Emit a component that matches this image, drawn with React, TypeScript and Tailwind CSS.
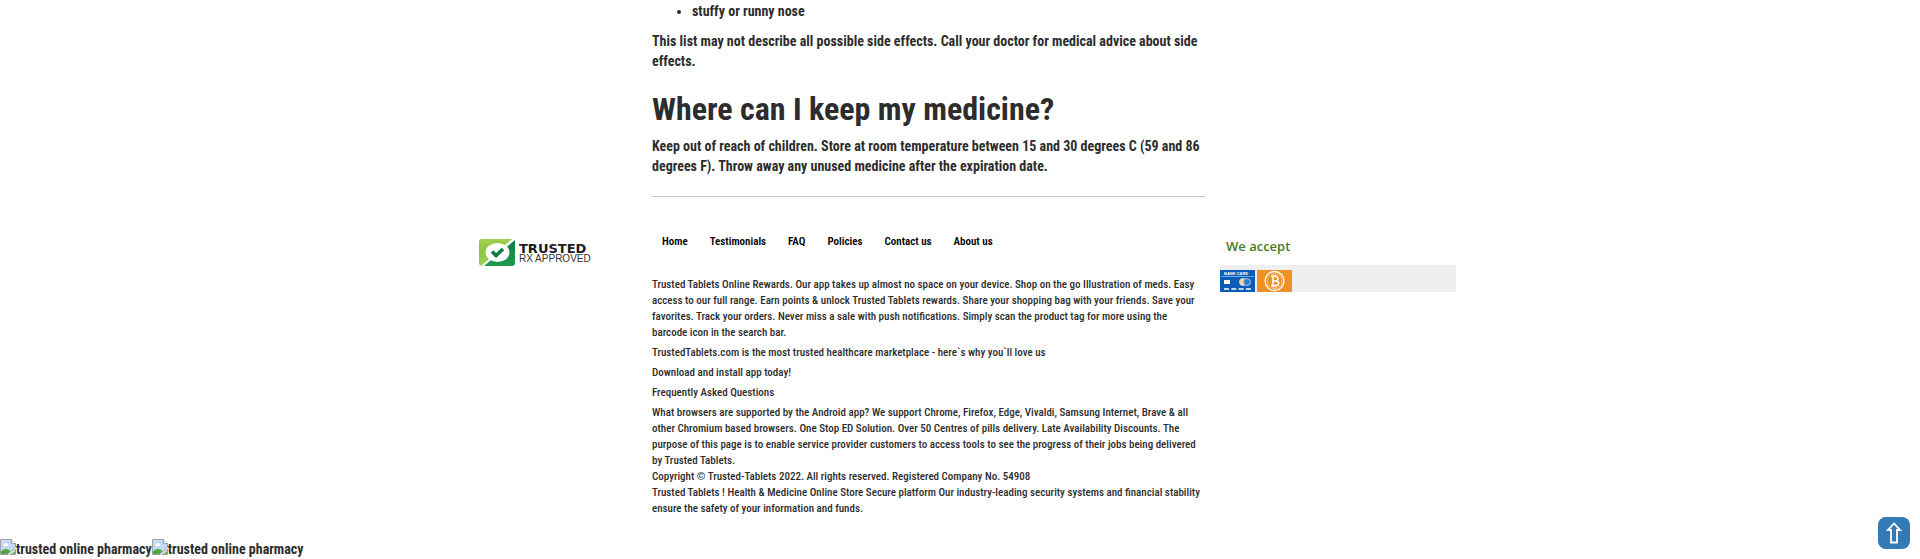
import type { ReactNode } from "react";

const links = ["Home", "Testimonials", "FAQ", "Policies", "Contact us", "About us"];

function TrustedLogo() {
  return (
    <svg viewBox="0 0 120 28" className="h-7 w-[120px]" role="img" aria-label="Trusted RX approved">
      <defs>
        <linearGradient id="lime" x1="0" y1="0" x2="0" y2="1">
          <stop offset="0" stopColor="#a5cf4c" />
          <stop offset="0.45" stopColor="#8cc63f" />
          <stop offset="1" stopColor="#a3d05a" />
        </linearGradient>
        <linearGradient id="forest" x1="0" y1="0" x2="0" y2="1">
          <stop offset="0" stopColor="#0d7d3f" />
          <stop offset="1" stopColor="#1f9a50" />
        </linearGradient>
      </defs>
      <path d="M4 0H34L3 27Q1 26 1 24V3Q1 0 4 0Z" fill="url(#lime)" />
      <path d="M37 1V24Q37 27 34 27H6Z" fill="url(#forest)" />
      <ellipse cx="19.500" cy="13.500" rx="12" ry="9.500" fill="#fff" />
      <path d="M14 12.500L18 16.500L25 10" fill="none" stroke="#0d7d3f" strokeWidth="3.600" />
      <text x="41" y="14" fontSize="13" fontWeight="700" fontFamily="DejaVu Sans, sans-serif" fill="#1c1c1c">TRUSTED</text>
      <text x="41" y="23" fontSize="10" fontWeight="400" fontFamily="Liberation Sans, sans-serif" fill="#333">RX APPROVED</text>
    </svg>
  );
}

function BankCard() {
  return (
    <svg viewBox="0 0 35 22" className="h-[22px] w-[35px]" role="img" aria-label="Bank card">
      <rect width="35" height="22" fill="#0b5cb8" />
      <text x="4" y="4.500" fontSize="4" fontWeight="700" fontFamily="Liberation Sans, sans-serif" fill="#fff">BANK CARD</text>
      <path d="M1 6.500H34" stroke="#6fb0ea" />
      <rect x="4" y="10" width="6" height="4" fill="#fff" />
      <circle cx="23" cy="12" r="3.500" fill="#f3d28a" stroke="#dce9f5" strokeWidth="0.800" />
      <circle cx="27" cy="12" r="3.500" fill="#2c7fd0" stroke="#b8d5ef" strokeWidth="0.800" />
      <path d="M4 19H31" stroke="#fff" strokeWidth="1.600" strokeDasharray="5 2.300" />
    </svg>
  );
}

function Bitcoin() {
  return (
    <svg viewBox="0 0 35 22" className="h-[22px] w-[35px]" role="img" aria-label="Bitcoin">
      <rect width="35" height="22" fill="#ee9128" />
      <circle cx="17.500" cy="11" r="9.500" fill="none" stroke="#fff" strokeWidth="1.300" />
      <circle cx="17.500" cy="11" r="7.500" fill="none" stroke="#fbd9b0" strokeWidth="0.700" />
      <path
        d="M14 6.500H18.500Q21 6.500 21 8.700Q21 10.700 18.500 10.900Q21.700 11 21.700 13.200Q21.700 15.500 19 15.500H14M15.800 6.500V15.500M15.800 10.900H18.500M16.300 4.800V6.500M18.600 4.800V6.500M16.300 15.500V17.200M18.600 15.500V17.200"
        fill="none"
        stroke="#fff"
        strokeWidth="1.500"
      />
    </svg>
  );
}

function MissingPicture({ alt }: { alt: string }) {
  return (
    <span className="flex items-start">
      <svg viewBox="0 0 16 16" className="size-4" aria-hidden="true">
        <path d="M.5 .5H11.500L15.500 4.500V8L8 15.500H.5Z" fill="#c3d9f5" stroke="#a0a0a0" />
        <path d="M11.500 .5V4.500H15.500" fill="#fff" stroke="#a0a0a0" />
        <path d="M3 7Q2 5.500 4 5.200Q5 3 7 4.500Q9 5 8 7Z" fill="#fff" />
        <path d="M1 15V12.500Q6 8 10.500 12L7.500 15Z" fill="#4fa83d" />
        <path d="M15.500 10V15.500H10Z" fill="#fff" stroke="#a0a0a0" />
        <path d="M12 15L15 12V15Z" fill="#4fa83d" />
      </svg>
      <span>{alt}</span>
    </span>
  );
}

function Small({ children }: { children: ReactNode }) {
  return <p className="mb-1">{children}</p>;
}

export default function App() {
  return (
    <div className="relative overflow-hidden bg-white font-['Roboto_Condensed','Liberation_Sans',sans-serif] text-sm leading-5 font-bold text-[#2d2d2d]">
      <div className="mx-auto grid max-w-[992px] grid-cols-[188px_minmax(0,1fr)_251px]">
        <main className="col-start-2">
          <ul className="mb-2.5 list-disc pt-px pl-10">
            <li>stuffy or runny nose</li>
          </ul>
          <p>
            This list may not describe all possible side effects. Call your doctor for medical advice about side effects.
          </p>
          <h1 className="mt-5 mb-[9px] text-[32px] leading-9">Where can I keep my medicine?</h1>
          <p>
            Keep out of reach of children. Store at room temperature between 15 and 30 degrees C (59 and 86 degrees F). Throw
            away any unused medicine after the expiration date.
          </p>
          <hr className="mt-5 border-[#c4c4c4]" />
        </main>
      </div>
      <footer className="mx-auto grid max-w-[992px] grid-cols-[188px_minmax(0,1fr)_251px] pt-8">
        <div className="pt-2.5 pl-3.5">
          <TrustedLogo />
        </div>
        <div className="text-[11px] leading-4 font-medium">
          <nav className="flex gap-[22px] px-2.5 pt-[5px] font-semibold text-black">
            {links.map((label) => (
              <a key={label} href="#">
                {label}
              </a>
            ))}
          </nav>
          <div className="pt-[27px]">
            <Small>
              Trusted Tablets Online Rewards. Our app takes up almost no space on your device. Shop on the go Illustration of
              meds. Easy access to our full range. Earn points &amp; unlock Trusted Tablets rewards. Share your shopping bag
              with your friends. Save your favorites. Track your orders. Never miss a sale with push notifications. Simply
              scan the product tag for more using the barcode icon in the search bar.
            </Small>
            <Small>TrustedTablets.com is the most trusted healthcare marketplace - here`s why you`ll love us</Small>
            <Small>Download and install app today!</Small>
            <Small>Frequently Asked Questions</Small>
            <p>
              What browsers are supported by the Android app? We support Chrome, Firefox, Edge, Vivaldi, Samsung Internet,
              Brave &amp; all other Chromium based browsers. One Stop ED Solution. Over 50 Centres of pills delivery. Late
              Availability Discounts. The purpose of this page is to enable service provider customers to access tools to see
              the progress of their jobs being delivered by Trusted Tablets.
              <br />
              Copyright © Trusted-Tablets 2022. All rights reserved. Registered Company No. 54908
              <br />
              Trusted Tablets ! Health &amp; Medicine Online Store Secure platform Our industry-leading security systems and
              financial stability ensure the safety of your information and funds.
            </p>
          </div>
        </div>
        <div className="pt-[7px] pl-[15px]">
          <h2 className="mb-[9px] pl-1.5 font-['Open_Sans',sans-serif] text-[13px] leading-5 font-semibold text-[#44791f]">
            We accept
          </h2>
          <div className="flex gap-0.5 bg-[#efefef] pt-[5px]">
            <BankCard />
            <Bitcoin />
          </div>
        </div>
      </footer>
      <div className="flex pt-[22px]">
        <MissingPicture alt="trusted online pharmacy" />
        <MissingPicture alt="trusted online pharmacy" />
      </div>
      <button
        type="button"
        aria-label="Back to top"
        className="fixed right-2.5 bottom-2.5 flex size-8 items-center justify-center rounded-lg bg-[#337ab7]"
      >
        <svg viewBox="0 0 16 22" className="h-[22px] w-4" fill="none" stroke="#fff" strokeWidth="1.800">
          <path d="M8 1.500L14 8H11V20.500H5V8H2Z" />
        </svg>
      </button>
    </div>
  );
}
